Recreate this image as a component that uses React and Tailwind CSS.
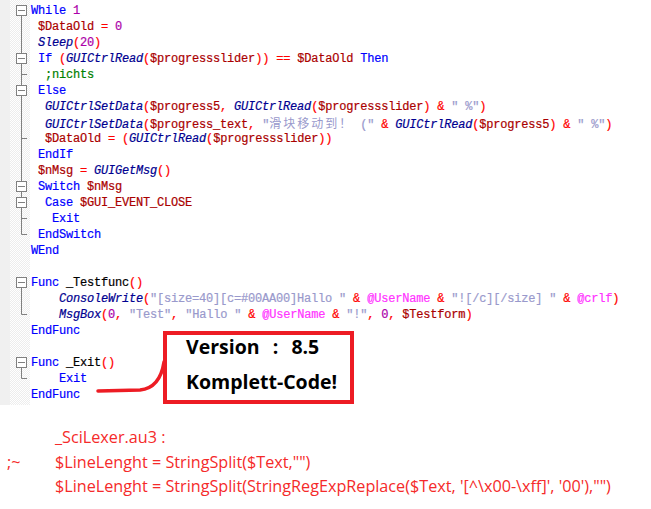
import React from 'react';

const KEYWORDS = ['While', 'WEnd', 'If', 'Then', 'Else', 'EndIf', 'Switch', 'Case', 'EndSwitch', 'Exit', 'Func', 'EndFunc'];
const FUNCS = ['Sleep', 'GUICtrlRead', 'GUICtrlSetData', 'GUIGetMsg', 'ConsoleWrite', 'MsgBox'];

// [fold marker, source text]
const LINES = [
    ['start', 'While 1'],
    ['line', ' $DataOld = 0'],
    ['line', ' Sleep(20)'],
    ['box', ' If (GUICtrlRead($progressslider)) == $DataOld Then'],
    ['tee', '  ;nichts'],
    ['box', ' Else'],
    ['line', '  GUICtrlSetData($progress5, GUICtrlRead($progressslider) & " %")'],
    ['line', '  GUICtrlSetData($progress_text, "滑块移动到！ (" & GUICtrlRead($progress5) & " %")'],
    ['tee', '  $DataOld = (GUICtrlRead($progressslider))'],
    ['line', ' EndIf'],
    ['line', ' $nMsg = GUIGetMsg()'],
    ['box', ' Switch $nMsg'],
    ['box', '  Case $GUI_EVENT_CLOSE'],
    ['tee', '   Exit'],
    ['end', ' EndSwitch'],
    ['none', 'WEnd'],
    ['none', ''],
    ['start', 'Func _Testfunc()'],
    ['line', '    ConsoleWrite("[size=40][c=#00AA00]Hallo " & @UserName & "![/c][/size] " & @crlf)'],
    ['end', '    MsgBox(0, "Test", "Hallo " & @UserName & "!", 0, $Testform)'],
    ['none', 'EndFunc'],
    ['none', ''],
    ['start', 'Func _Exit()'],
    ['end', '    Exit'],
    ['none', 'EndFunc'],
];

const RULES = [
    [/^;.*/, 'comment'],
    [/^"[^"]*"/, 'string'],
    [/^\$\w+/, 'var'],
    [/^@\w+/, 'macro'],
    [/^\d+\b/, 'number'],
    [/^\w+/, 'word'],
    [/^\s+/, 'space'],
    [/^[()=&,<>+\-*/]/, 'op'],
    [/^./, 'plain'],
];

const tokenize = (src) => {
    const out = [];
    let rest = src;
    while (rest.length) {
        for (const [re, type] of RULES) {
            const m = rest.match(re);
            if (m) {
                let t = type;
                if (type === 'word') {
                    t = KEYWORDS.includes(m[0]) ? 'keyword' : FUNCS.includes(m[0]) ? 'func' : 'plain';
                }
                out.push([t, m[0]]);
                rest = rest.slice(m[0].length);
                break;
            }
        }
    }
    return out;
};

const STYLE = {
    comment: 'text-[#008000]',
    string: 'text-[#9999cc]',
    var: 'text-[#aa0000]',
    macro: 'text-[#ff33ff]',
    number: 'text-[#ac00a9]',
    keyword: 'text-[#0000ff]',
    func: 'text-[#000090] italic',
    op: 'text-[#ff0000]',
    space: '',
    plain: 'text-black',
};

const StringToken = ({ text }) => {
    const parts = text.split(/([\u3000-\u9fff\uff00-\uffef]+)/);
    return (
        <span className={STYLE.string}>
            {parts.map((p, i) =>
                i % 2 === 1 ? (
                    <span key={i} className="font-['Noto_Sans_CJK_SC',sans-serif] text-[12px] leading-[16px] tracking-[2px] [-webkit-text-stroke:0px]">{p}</span>
                ) : (
                    <span key={i}>{p}</span>
                )
            )}
        </span>
    );
};

const FoldMark = ({ kind }) => {
    const g = '#808080';
    return (
        <svg width="20" height="16" className="block">
            {(kind === 'line' || kind === 'tee') && <line x1="11.5" y1="0" x2="11.5" y2="16" stroke={g} />}
            {kind === 'tee' && <line x1="11" y1="8.5" x2="17" y2="8.5" stroke={g} />}
            {kind === 'end' && <path d="M11.5 0 V8.5 H17" fill="none" stroke={g} />}
            {kind === 'box' && <line x1="11.5" y1="0" x2="11.5" y2="3" stroke={g} />}
            {(kind === 'box' || kind === 'start') && (
                <>
                    <rect x="6.5" y="3.5" width="10" height="10" fill="#fff" stroke={g} />
                    <line x1="8" y1="8.5" x2="15" y2="8.5" stroke={g} />
                    <line x1="11.5" y1="13" x2="11.5" y2="16" stroke={g} />
                </>
            )}
        </svg>
    );
};

const Gutter = ({ children, h }) => (
    <div className={`flex shrink-0 ${h}`}>
        <div className="w-[10px] bg-[#f0f0f0]" />
        <div className="w-[20px] bg-[repeating-conic-gradient(#ededed_0_25%,#ffffff_0_50%)] bg-size-[2px_2px]">{children}</div>
        <div className="w-[1px]" />
    </div>
);

const CodeLine = ({ kind, text }) => (
    <div className="flex h-[16px] overflow-visible">
        <Gutter h="h-[16px]">
            <FoldMark kind={kind} />
        </Gutter>
        <div className="whitespace-pre leading-[16px] pt-[1px] [-webkit-text-stroke:0.2px]">
            {tokenize(text).map(([t, v], i) =>
                t === 'string' ? <StringToken key={i} text={v} /> : <span key={i} className={STYLE[t]}>{v}</span>
            )}
        </div>
    </div>
);

export default function App() {
    return (
        <div className="w-[651px] h-[509px] bg-white overflow-hidden">
            {/* Editor */}
            <div className="relative font-['Liberation_Mono',monospace] text-[12px] tracking-[-0.2px]">
                <Gutter h="h-[2px]" />
                {LINES.map(([kind, text], i) => (
                    <CodeLine key={i} kind={kind} text={text} />
                ))}
                <Gutter h="h-[3px]" />

                {/* Callout */}
                <svg className="absolute left-[95px] top-[355px]" width="72" height="40">
                    <path d="M3 36 L45 35 Q65 33 69 7" fill="none" stroke="#ed1c24" strokeWidth="3.5" strokeLinecap="round" />
                </svg>
                <div className="absolute left-[163px] top-[331px] w-[191px] h-[73px] border-4 border-[#ed1c24] bg-white pl-[19px] flex flex-col gap-[11px] font-['Open_Sans',sans-serif] font-bold text-[19.5px] leading-[24px] tracking-normal text-black">
                    <div className="whitespace-pre [word-spacing:1.5px]">Version  :  8.5</div>
                    <div>Komplett-Code!</div>
                </div>
            </div>

            {/* Notes */}
            <div className="pt-[20px] font-['Open_Sans',sans-serif] text-[16.2px] leading-[24.5px] text-[#f52a2a]">
                <div className="flex">
                    <div className="w-[55px] pl-[7px] shrink-0" />
                    <div>_SciLexer.au3 :</div>
                </div>
                <div className="flex">
                    <div className="w-[55px] pl-[7px] shrink-0">;~</div>
                    <div>$LineLenght = StringSplit($Text,"")</div>
                </div>
                <div className="flex">
                    <div className="w-[55px] pl-[7px] shrink-0" />
                    <div className="whitespace-pre">$LineLenght = StringSplit(StringRegExpReplace($Text, '[^\x00-\xff]', '00'),"")</div>
                </div>
            </div>
        </div>
    );
}
